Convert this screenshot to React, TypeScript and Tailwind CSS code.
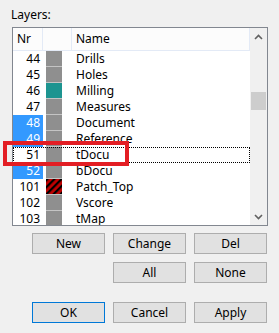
import React from "react";

type Row = { nr: string; name: string; sel?: boolean; focus?: boolean; swatch: "gray" | "teal" | "stripe" };

const rows: Row[] = [
  { nr: "44", name: "Drills", swatch: "gray" },
  { nr: "45", name: "Holes", swatch: "gray" },
  { nr: "46", name: "Milling", swatch: "teal" },
  { nr: "47", name: "Measures", swatch: "gray" },
  { nr: "48", name: "Document", swatch: "gray", sel: true },
  { nr: "49", name: "Reference", swatch: "gray", sel: true },
  { nr: "51", name: "tDocu", swatch: "gray", focus: true },
  { nr: "52", name: "bDocu", swatch: "gray", sel: true },
  { nr: "101", name: "Patch_Top", swatch: "stripe" },
  { nr: "102", name: "Vscore", swatch: "gray" },
  { nr: "103", name: "tMap", swatch: "gray" },
];

function Swatch({ kind }: { kind: Row["swatch"] }) {
  if (kind === "stripe") {
    return (
      <svg width="16" height="15" className="block">
        <defs>
          <pattern id="st" width="5" height="5" patternUnits="userSpaceOnUse" patternTransform="rotate(45)">
            <rect width="5" height="5" fill="#c00000" />
            <rect width="2.2" height="5" fill="#000" />
          </pattern>
        </defs>
        <rect width="16" height="15" fill="url(#st)" />
      </svg>
    );
  }
  return <div className={`w-[16px] h-[15px] ${kind === "teal" ? "bg-[#1d9490]" : "bg-[#8f8f8f]"}`} />;
}

function Btn({ label, def }: { label: string; def?: boolean }) {
  return (
    <div
      className={`h-[21px] w-[73px] flex items-center justify-center bg-[#e1e1e1] border text-[12px] text-black ${
        def ? "border-[#0078d7]" : "border-[#adadad]"
      }`}
    >
      {label}
    </div>
  );
}

export default function App() {
  return (
    <div
      className="relative w-[279px] h-[333px] bg-[#f0f0f0] overflow-hidden text-black"
      style={{ fontFamily: '"Noto Sans", "Liberation Sans", sans-serif' }}
    >
      <div className="pt-[7px] pl-[11px] text-[12px] leading-[16px] h-[27px]">Layers:</div>
      <div className="ml-[12px] w-[256px] h-[199px] border border-[#828790] bg-white flex">
        <div className="w-[237px] h-full flex flex-col overflow-hidden">
          <div className="h-[23px] shrink-0 flex bg-[#fcfcfc] border-b border-r border-[#e3eaf6] text-[12px]">
            <div className="w-[30px] border-r border-[#e3eaf6] pl-[4px] flex items-center">Nr</div>
            <div className="w-[29px] border-r border-[#e3eaf6]" />
            <div className="pl-[4px] flex items-center">Name</div>
          </div>
          <div className="flex flex-col">
            {rows.map((r) => (
              <div
                key={r.nr}
                className={`relative h-[16px] shrink-0 flex items-center text-[12px] leading-[16px] ${
                  r.focus ? "outline outline-1 outline-dotted outline-black -outline-offset-1" : ""
                }`}
              >
                <div
                  className={`w-[30px] h-full text-right pr-[3px] ${
                    r.sel ? "bg-[#3399ff] text-white" : ""
                  }`}
                >
                  {r.nr}
                </div>
                <div className="w-[33px] h-full pl-[3px] flex flex-col items-start">
                  <Swatch kind={r.swatch} />
                  <div className="w-[16px] h-[1px] bg-[#c4c4c4]" />
                </div>
                <div>{r.name}</div>
              </div>
            ))}
          </div>
        </div>
        <div className="w-[17px] h-full bg-[#f0f0f0] flex flex-col items-center">
          <div className="h-[17px] w-full flex items-center justify-center">
            <svg width="9" height="6" viewBox="0 0 9 6">
              <path d="M1 5 L4.5 1.5 L8 5" stroke="#606060" strokeWidth="1.6" fill="none" />
            </svg>
          </div>
          <div className="h-[47px]" />
          <div className="w-[15px] h-[18px] bg-[#cdcdcd]" />
          <div className="flex-1" />
          <div className="h-[17px] w-full flex items-center justify-center">
            <svg width="9" height="6" viewBox="0 0 9 6">
              <path d="M1 1 L4.5 4.5 L8 1" stroke="#606060" strokeWidth="1.6" fill="none" />
            </svg>
          </div>
        </div>
      </div>

      <div className="ml-[32px] mt-[7px] grid grid-cols-[73px_73px_73px] gap-x-[8px]">
        <Btn label="New" />
        <Btn label="Change" />
        <Btn label="Del" />
        <div className="col-start-2 mt-[8px]">
          <Btn label="All" />
        </div>
        <div className="mt-[8px]">
          <Btn label="None" />
        </div>
        <div className="mt-[19px]">
          <Btn label="OK" def />
        </div>
        <div className="mt-[19px]">
          <Btn label="Cancel" />
        </div>
        <div className="mt-[19px]">
          <Btn label="Apply" />
        </div>
      </div>

      <div className="absolute left-[3px] top-[141px] w-[126px] h-[25px] border-[4px] border-[#e31e24]" />
    </div>
  );
}
